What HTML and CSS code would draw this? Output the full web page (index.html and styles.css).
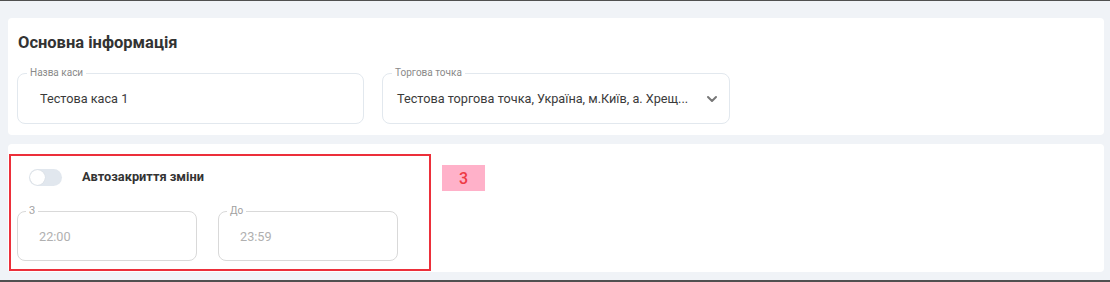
FILE: index.html
```html
<!DOCTYPE html>
<html lang="uk">
<head>
<meta charset="utf-8">
<link rel="stylesheet" href="styles.css">
</head>
<body>
<section class="card card-main">
  <h2 class="card-title">Основна інформація</h2>
  <div class="fields">
    <div class="field field-name">
      <span class="field-label">Назва каси</span>
      <span class="field-value">Тестова каса 1</span>
    </div>
    <div class="field field-select">
      <span class="field-label">Торгова точка</span>
      <span class="field-value select-text">Тестова торгова точка, Україна, м.Київ, а. Хрещ...</span>
      <svg class="chevron" width="12" height="8" viewBox="0 0 12 8"><path d="M2 2 L6 6 L10 2" fill="none" stroke="#777" stroke-width="2" stroke-linecap="round" stroke-linejoin="round"/></svg>
    </div>
  </div>
</section>
<section class="card card-auto">
  <div class="highlight">
    <div class="toggle-row">
      <span class="toggle"><span class="knob"></span></span>
      <span class="toggle-text">Автозакриття зміни</span>
    </div>
    <div class="times">
      <div class="field field-time">
        <span class="field-label">З</span>
        <span class="field-value muted">22:00</span>
      </div>
      <div class="field field-time">
        <span class="field-label">До</span>
        <span class="field-value muted">23:59</span>
      </div>
    </div>
  </div>
  <div class="badge">3</div>
</section>
</body>
</html>
```
FILE: styles.css
```css
html, body {
  margin: 0;
}
body {
  box-sizing: border-box;
  width: 1110px;
  height: 282px;
  background: #f0f3f7;
  border-top: 1px solid #505050;
  border-bottom: 2px solid #505050;
  padding: 17px 6px 0 8px;
  font-family: Roboto, "Liberation Sans", sans-serif;
  color: #333;
}
.card {
  background: #fff;
  border-radius: 4px;
  box-sizing: border-box;
}
.card-main {
  height: 117px;
  padding: 15px 10px 11px 9px;
}
.card-title {
  margin: 0 0 20px 1px;
  font-size: 16.5px;
  line-height: 20px;
  font-weight: 700;
  color: #333;
}
.fields {
  display: flex;
  gap: 18px;
}
.field {
  position: relative;
  box-sizing: border-box;
  height: 51px;
  border: 1px solid #e2e8ee;
  border-radius: 8px;
  display: flex;
  align-items: center;
}
.field-name {
  width: 347px;
  padding-left: 22px;
}
.field-select {
  width: 348px;
  padding-left: 14px;
  padding-right: 11px;
}
.field-label {
  position: absolute;
  top: -7px;
  left: 9px;
  padding: 0 3px;
  background: #fff;
  font-size: 10px;
  line-height: 12px;
  color: #8a8a8a;
}
.field-value {
  font-size: 12.7px;
  color: #3a3a3a;
}
.select-text {
  flex: 1;
  white-space: nowrap;
  min-width: 0;
}
.chevron {
  flex: none;
  margin-top: 1px;
}
.card-auto {
  margin-top: 9px;
  height: 128px;
  padding: 10px 0 0 1px;
  display: flex;
  align-items: flex-start;
  gap: 11px;
}
.highlight {
  box-sizing: border-box;
  width: 422px;
  height: 117px;
  border: 2px solid #ec2f3a;
  padding: 0 0 0 6px;
}
.toggle-row {
  display: flex;
  align-items: center;
  gap: 20px;
  margin: 13px 0 0 12px;
}
.toggle {
  width: 33px;
  height: 17px;
  border-radius: 9px;
  background: #e1e7ee;
  display: flex;
  align-items: center;
  padding-left: 1px;
  box-sizing: border-box;
}
.knob {
  width: 15px;
  height: 15px;
  border-radius: 50%;
  background: #fff;
  box-shadow: 0 0 1px rgba(0,0,0,0.15);
}
.toggle-text {
  font-size: 12.8px;
  font-weight: 700;
  color: #333;
  margin-top: -2px;
}
.times {
  display: flex;
  gap: 21px;
  margin-top: 25px;
}
.field-time {
  width: 180px;
  height: 50px;
  border-color: #d9d9d9;
  padding-left: 21px;
}
.field-time .field-label {
  left: 8px;
  color: #a0a0a0;
}
.muted {
  color: #b0b0b0;
}
.badge {
  margin-top: 11px;
  width: 43px;
  height: 26px;
  background: #ffb1c9;
  color: #ee3a45;
  font-size: 16px;
  font-weight: 500;
  display: flex;
  align-items: center;
  justify-content: center;
}
```
